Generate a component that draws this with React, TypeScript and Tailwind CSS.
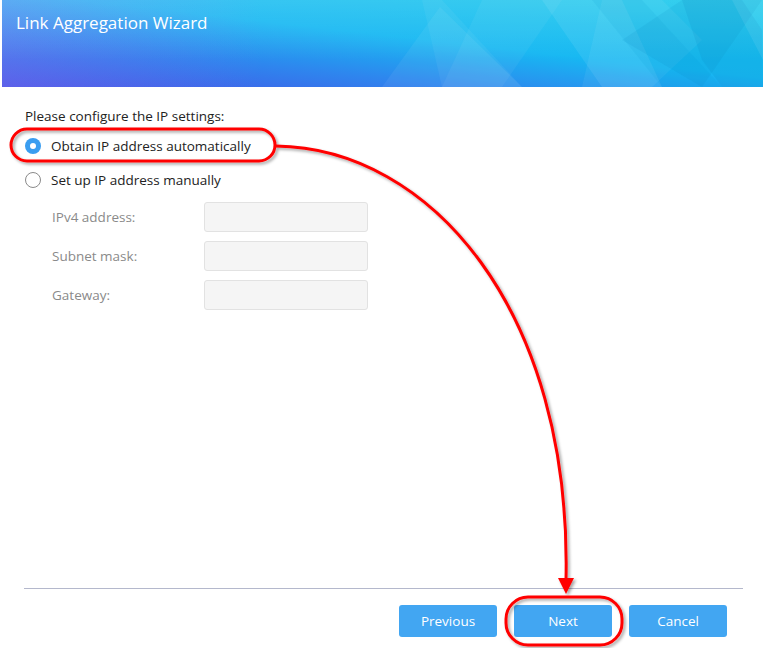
import React from "react";

const font = { fontFamily: '"Open Sans", "Noto Sans", sans-serif' };

/* ── header backdrop: gradient plus faint diamond shapes ── */
function HeaderArt() {
  return (
    <svg className="absolute inset-0 h-full w-full" viewBox="0 0 761 87" preserveAspectRatio="none" aria-hidden="true">
      <defs>
        <linearGradient id="hg" x1="0" y1="1" x2="1" y2="0">
          <stop offset="0" stopColor="#4550e6" />
          <stop offset="0.3" stopColor="#2e86ee" />
          <stop offset="0.55" stopColor="#17b8f2" />
          <stop offset="1" stopColor="#12c8ea" />
        </linearGradient>
        <linearGradient id="hl" x1="0" y1="0" x2="1" y2="0">
          <stop offset="0" stopColor="#8a7ff0" stopOpacity="0.35" />
          <stop offset="1" stopColor="#8a7ff0" stopOpacity="0" />
        </linearGradient>
        <linearGradient id="ht" x1="0" y1="0" x2="0" y2="1">
          <stop offset="0" stopColor="#ffffff" stopOpacity="0.14" />
          <stop offset="1" stopColor="#ffffff" stopOpacity="0" />
        </linearGradient>
      </defs>
      <rect width="761" height="87" fill="url(#hg)" />
      <rect width="260" height="87" fill="url(#hl)" />
      <rect width="761" height="60" fill="url(#ht)" />
      <polygon points="420,0 440,0 520,87 440,87" fill="#ffffff" opacity="0.05" />
      <polygon points="438,7 520,87 380,87" fill="#ffffff" opacity="0.06" />
      <polygon points="480,0 560,0 500,87 440,87" fill="#ffffff" opacity="0.05" />
      <polygon points="540,0 620,0 660,87 600,87" fill="#ffffff" opacity="0.08" />
      <polygon points="600,0 660,0 700,40 650,87 580,87" fill="#ffffff" opacity="0.06" />
      <polygon points="590,0 640,0 720,87 660,87" fill="#0090d0" opacity="0.1" />
      <polygon points="620,40 680,0 760,0 700,87" fill="#0a80c0" opacity="0.12" />
      <polygon points="680,0 740,0 760,30 761,87 720,87 700,60" fill="#0a7ab8" opacity="0.13" />
      <polygon points="730,0 761,0 761,60" fill="#ffffff" opacity="0.08" />
    </svg>
  );
}

/* ── red callout marks drawn over the dialog ── */
function Annotations() {
  return (
    <svg className="pointer-events-none absolute inset-0" width="763" height="648" viewBox="0 0 763 648" aria-hidden="true">
      <defs>
        <filter id="sh" x="-10%" y="-10%" width="120%" height="120%">
          <feDropShadow dx="2" dy="2" stdDeviation="1.5" floodColor="#000" floodOpacity="0.35" />
        </filter>
      </defs>
      <g filter="url(#sh)" stroke="#ff0000" strokeWidth="3" fill="none">
        <rect x="11" y="129" width="264" height="32" rx="16" />
        <path d="M276 146 C 430 148, 572 310, 566 580" />
        <rect x="506" y="597" width="116" height="48" rx="22" />
        <polygon points="558,578 574,578 566,594" fill="#ff0000" stroke="none" />
      </g>
    </svg>
  );
}

function Radio({ checked, label }: { checked?: boolean; label: string }) {
  return (
    <div className="flex h-[34px] items-center">
      {checked ? (
        <span className="flex h-[16px] w-[16px] items-center justify-center rounded-full bg-[#3a9df0]">
          <span className="h-[6px] w-[6px] rounded-full bg-white" />
        </span>
      ) : (
        <span className="h-[16px] w-[16px] rounded-full border border-[#8a8a8a] bg-white" />
      )}
      <span className="ml-[10px] text-[13.5px] text-[#222]">{label}</span>
    </div>
  );
}

function Field({ label }: { label: string }) {
  return (
    <div className="flex h-[39px] items-center">
      <span className="w-[152px] text-[13.5px] text-[#8a8a8a]">{label}</span>
      <div className="h-[30px] w-[164px] rounded-[3px] border border-[#e2e2e2] bg-[#f5f5f5]" />
    </div>
  );
}

function Btn({ children }: { children: React.ReactNode }) {
  return (
    <button className="h-[32px] w-[98px] rounded-[3px] bg-[#42a6f2] text-[13.5px] text-white">
      {children}
    </button>
  );
}

export default function App() {
  return (
    <div className="relative flex h-[648px] w-[763px] flex-col overflow-hidden bg-white" style={font}>
      <header className="relative ml-[2px] h-[87px]">
        <HeaderArt />
        <h1 className="relative pl-[14px] pt-[10px] text-[17px] text-white">Link Aggregation Wizard</h1>
      </header>

      <main className="flex-1 pl-[25px] pt-[19px]">
        <p className="text-[13.5px] text-[#222]">Please configure the IP settings:</p>
        <div className="mt-[3px]">
          <Radio checked label="Obtain IP address automatically" />
          <Radio label="Set up IP address manually" />
        </div>
        <div className="ml-[27px]">
          <Field label="IPv4 address:" />
          <Field label="Subnet mask:" />
          <Field label="Gateway:" />
        </div>
      </main>

      <div className="ml-[24px] mr-[20px] h-px bg-[#b4b8cc]" />
      <div className="flex h-[59px] items-start justify-end gap-[17px] pr-[36px] pt-[16px]">
        <Btn>Previous</Btn>
        <Btn>Next</Btn>
        <Btn>Cancel</Btn>
      </div>

      <Annotations />
    </div>
  );
}
